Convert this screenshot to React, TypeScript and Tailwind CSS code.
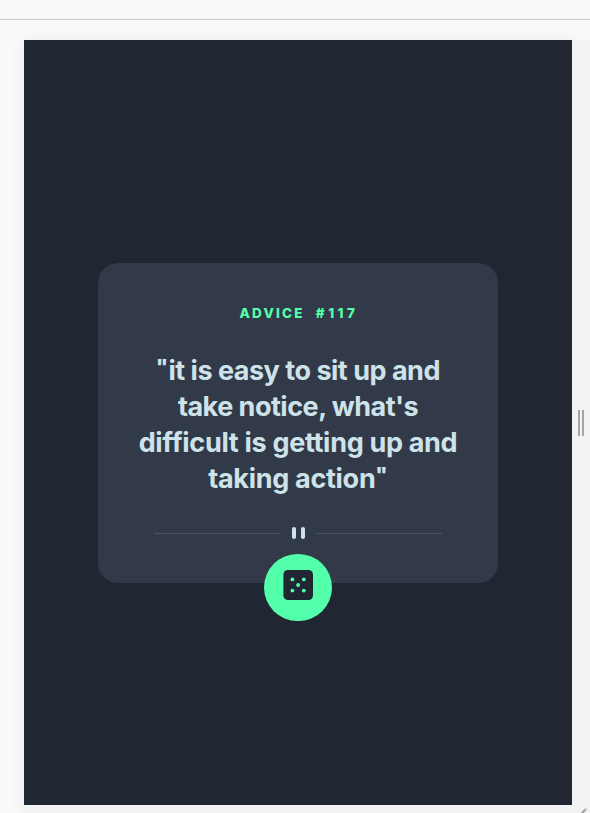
const lines = [
  { open: '"', text: "it is easy to sit up and", close: "", spacing: "tracking-[-0.49px]" },
  { open: "", text: "take notice, what's", close: "", spacing: "tracking-[-0.5px]" },
  { open: "", text: "difficult is getting up and", close: "", spacing: "tracking-[-0.31px]" },
  { open: "", text: "taking action", close: '"', spacing: "tracking-[-0.3px]" },
];

function QuoteMark({ mark }: { mark: string }) {
  return (
    <span className="align-[7px] text-[19px] leading-none font-black tracking-[0.5px]">
      {mark}
    </span>
  );
}

function DiceIcon() {
  return (
    <svg width="30" height="30" viewBox="0 0 30 30" aria-hidden="true">
      <rect x="0.4" width="29.6" height="30" rx="4.6" fill="#202733" />
      <g fill="#53ffaa">
        <circle cx="9.4" cy="9.4" r="1.9" />
        <circle cx="20.8" cy="9.4" r="1.9" />
        <circle cx="15.1" cy="15" r="1.9" />
        <circle cx="9.4" cy="20.6" r="1.9" />
        <circle cx="20.8" cy="20.6" r="1.9" />
      </g>
    </svg>
  );
}

function Divider() {
  return (
    <div className="flex h-4 w-[288px] items-center">
      <span className="h-px w-[127px] bg-[#4a5265]" />
      <span className="flex w-[34px] gap-[5px] pl-[10.5px]">
        <i className="h-[12px] w-[4px] rounded-[2px] bg-[#cee3e9]" />
        <i className="h-[12px] w-[4px] rounded-[2px] bg-[#cee3e9]" />
      </span>
      <span className="h-px w-[127px] bg-[#4a5265]" />
    </div>
  );
}

function AdviceCard() {
  return (
    <section className="mt-[223px] flex h-[320px] w-[400px] flex-col items-center rounded-[20px] bg-[#323a49] pt-[40px]">
      <h1 className="flex h-5 items-center gap-[11px] pl-[2px] text-[13.5px] leading-5 font-extrabold text-[#53ffaa]">
        <span className="tracking-[2.2px]">ADVICE</span>
        <span className="tracking-[3.5px]">#117</span>
      </h1>
      <p className="mt-[30px] flex flex-col items-center text-[27px] leading-[36px] font-bold text-[#cee3e9]">
        {lines.map((line) => (
          <span key={line.text} className={"h-9 whitespace-nowrap " + line.spacing}>
            {line.open && <QuoteMark mark={line.open} />}
            {line.text}
            {line.close && <QuoteMark mark={line.close} />}
          </span>
        ))}
      </p>
      <div className="mt-[28px]">
        <Divider />
      </div>
      <button
        aria-label="New advice"
        className="mt-[13px] flex h-[67px] w-[68px] shrink-0 items-start justify-center rounded-full bg-[#53ffaa] pt-[16px]"
      >
        <DiceIcon />
      </button>
    </section>
  );
}

export default function App() {
  return (
    <div className="flex h-[813px] w-[590px] flex-col overflow-hidden bg-[#fafafa] font-['Inter',sans-serif]">
      <div className="h-5 shrink-0 border-b border-[#cacaca] bg-[#f9f9f9]" />
      <div className="flex h-[793px] pt-5 pl-6">
        <div className="flex h-[773px] w-[548px] shrink-0 flex-col bg-[#f2f3f4] shadow-[0_0_16px_rgba(0,0,0,0.07)]">
          <main className="flex h-[765px] flex-col items-center bg-[#202733]">
            <AdviceCard />
          </main>
        </div>
        <aside className="z-10 flex h-[773px] w-[18px] flex-col bg-[#f1f3f4]">
          <div className="mt-[370px] flex h-[26px] gap-[2px] pl-[6px]">
            <span className="w-[2px] bg-[#a5a5a5]" />
            <span className="w-[2px] bg-[#a5a5a5]" />
          </div>
          <svg className="mt-auto ml-[7px]" width="11" height="5" viewBox="0 0 11 5" aria-hidden="true">
            <path d="M2 6 L7 1" stroke="#a0a0a0" strokeWidth="2" />
          </svg>
        </aside>
      </div>
    </div>
  );
}
